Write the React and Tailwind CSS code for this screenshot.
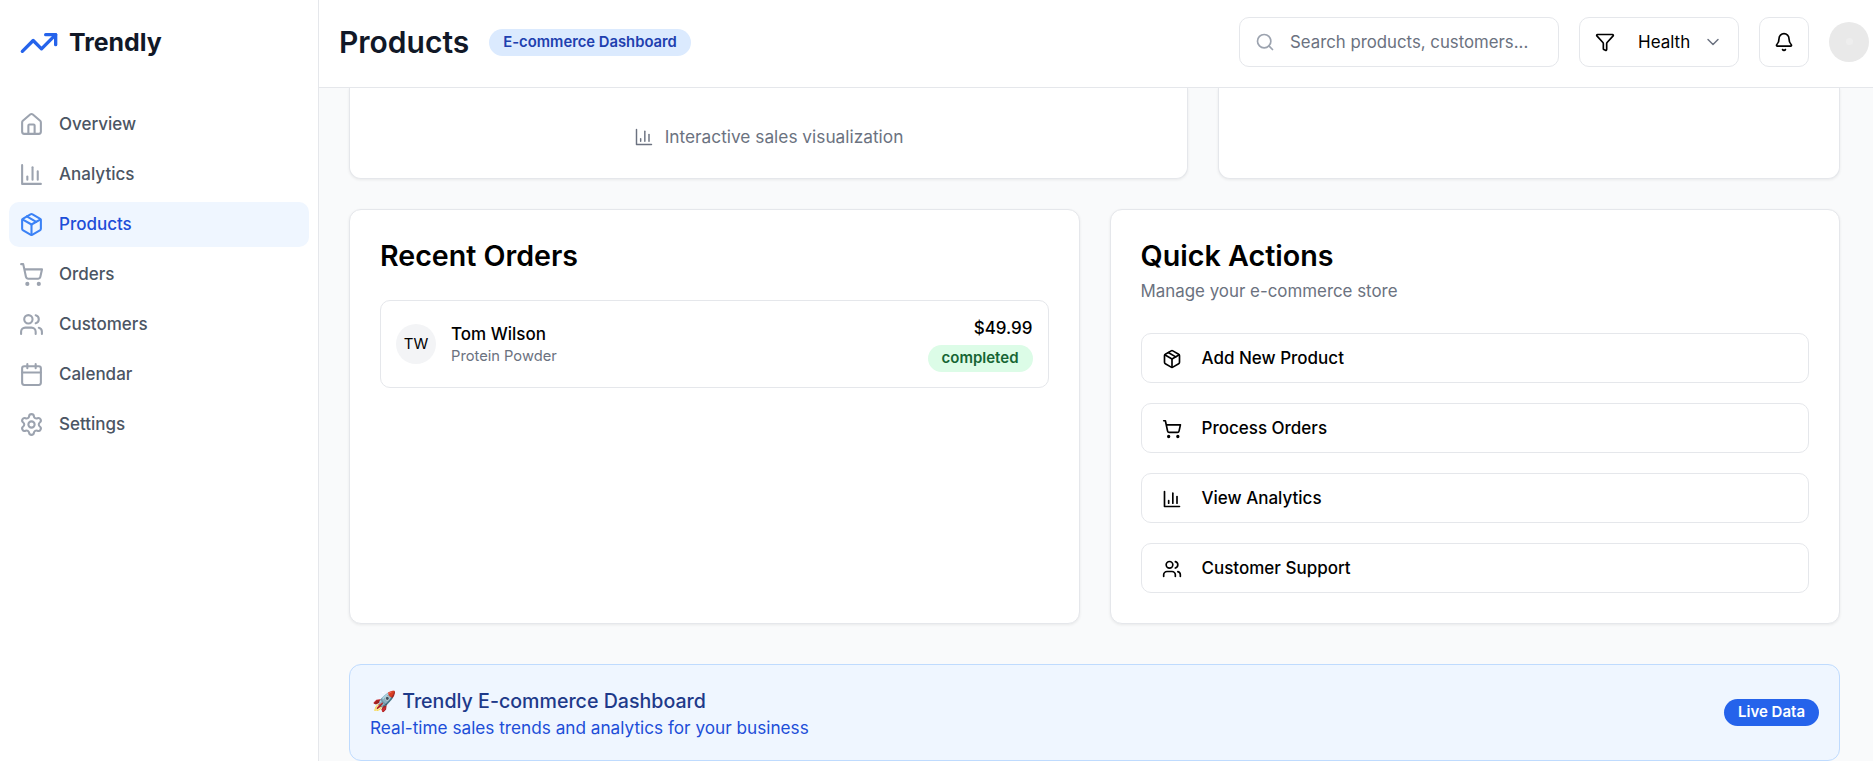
import { House, Package, ShoppingCart, Users, Calendar, Settings, Search, Funnel, ChevronDown, Bell, TrendingUp } from 'lucide-react'

// square-cornered bar chart, lucide's current one has a rounded axis
function BarChart({ className, strokeWidth = 2 }) {
  return (
    <svg
      className={className}
      viewBox="0 0 24 24"
      fill="none"
      stroke="currentColor"
      strokeWidth={strokeWidth}
      strokeLinecap="round"
      strokeLinejoin="round"
    >
      <path d="M3 3v18h18" />
      <path d="M18 17V9" />
      <path d="M13 17V5" />
      <path d="M8 17v-3" />
    </svg>
  )
}

const navItems = [
  { label: 'Overview', icon: House },
  { label: 'Analytics', icon: BarChart },
  { label: 'Products', icon: Package, active: true },
  { label: 'Orders', icon: ShoppingCart },
  { label: 'Customers', icon: Users },
  { label: 'Calendar', icon: Calendar },
  { label: 'Settings', icon: Settings },
]

const actions = [
  { label: 'Add New Product', icon: Package },
  { label: 'Process Orders', icon: ShoppingCart },
  { label: 'View Analytics', icon: BarChart },
  { label: 'Customer Support', icon: Users },
]

function Sidebar() {
  return (
    <aside className="w-[319px] shrink-0 bg-white border-r border-[#e5e7eb]">
      <div className="h-[88px] flex items-center pl-[19px] pb-[2px] gap-[10px]">
        <TrendingUp className="w-[40px] h-[40px] text-[#2563eb]" strokeWidth={2} />
        <span className="text-[24.9px] font-bold text-[#111827]">Trendly</span>
      </div>
      <nav className="mt-[14px] px-[9px] flex flex-col gap-[5px]">
        {navItems.map((item) => {
          const Icon = item.icon
          return (
            <div
              key={item.label}
              className={`h-[45px] flex items-center gap-[15px] pl-[10px] pr-[10px] rounded-[10px] text-[17px] font-medium ${
                item.active ? 'bg-[#eff6ff] text-[#1d4ed8]' : 'text-[#4b5563]'
              }`}
            >
              <Icon className={`w-[25px] h-[25px] ${item.active ? 'text-[#3b82f6]' : 'text-[#9ca3af]'}`} strokeWidth={2} />
              {item.label}
            </div>
          )
        })}
      </nav>
    </aside>
  )
}

function Header() {
  return (
    <header className="h-[88px] shrink-0 bg-white border-b border-[#e5e7eb] flex items-center justify-between pl-[20px] pr-[4px] pb-[4px]">
      <div className="flex items-center gap-[20px] pt-[2px]">
        <h1 className="text-[30px] font-semibold text-[#111827]">Products</h1>
        <span className="h-[27px] px-[14px] flex items-center rounded-full bg-[#dbeafe] text-[#1e40af] text-[14.8px] font-semibold">
          E-commerce Dashboard
        </span>
      </div>
      <div className="flex items-center gap-[20px]">
        <div className="w-[320px] h-[50px] flex items-center gap-[15px] px-[15px] bg-white border border-[#e5e7eb] rounded-[10px]">
          <Search className="w-[20px] h-[20px] text-[#9ca3af]" strokeWidth={2} />
          <span className="mt-[2px] text-[16.8px] text-[#6b7280]">Search products, customers...</span>
        </div>
        <div className="w-[160px] h-[50px] flex items-center px-[15px] bg-white border border-[#e5e7eb] rounded-[10px]">
          <Funnel className="w-[20px] h-[20px] text-black" strokeWidth={2} />
          <span className="mt-[2px] ml-[23px] text-[17px] text-black">Health</span>
          <ChevronDown className="ml-auto w-[20px] h-[20px] text-[#6b7280]" strokeWidth={1.75} />
        </div>
        <div className="w-[50px] h-[50px] flex items-center justify-center bg-white border border-[#e5e7eb] rounded-[10px]">
          <Bell className="w-[20px] h-[20px] text-black" strokeWidth={2} />
        </div>
        <div className="w-[40px] h-[40px] rounded-full bg-[#e9e9e9] flex items-center justify-center">
          <div className="w-[7px] h-[7px] rounded-full bg-[#eeeeee]" />
        </div>
      </div>
    </header>
  )
}

function Card({ className, children }) {
  return (
    <div className={`bg-white border border-[#e5e7eb] rounded-[12px] shadow-[0_1px_3px_rgba(0,0,0,0.07)] ${className}`}>
      {children}
    </div>
  )
}

function App() {
  return (
    <div className="flex h-screen overflow-hidden bg-[#f9fafb] font-['Inter',sans-serif]">
      <Sidebar />
      <div className="flex-1 min-w-0 flex flex-col">
        <Header />
        <main className="flex-1 min-h-0 overflow-hidden pl-[30px] pr-[33px]">
          {/* chart row, scrolled off at the top */}
          <div className="grid grid-cols-[839px_622px] gap-[30px] h-[91px]">
            <Card className="rounded-t-none border-t-0 flex items-center justify-center gap-[11px] pt-[7px] text-[#6b7280]">
              <BarChart className="w-[20px] h-[20px]" strokeWidth={1.75} />
              <span className="text-[17.3px]">Interactive sales visualization</span>
            </Card>
            <Card className="rounded-t-none border-t-0" />
          </div>

          <div className="grid grid-cols-2 gap-[30px] mt-[30px] h-[414px]">
            <Card className="p-[30px]">
              <h2 className="text-[28.6px] font-semibold text-black leading-[32px]">Recent Orders</h2>
              <div className="mt-[28px] h-[88px] flex items-center justify-between px-[15px] border border-[#e5e7eb] rounded-[10px]">
                <div className="flex items-center gap-[15px]">
                  <div className="w-[40px] h-[40px] rounded-full bg-[#f3f4f6] flex items-center justify-center text-[15px] text-black">
                    TW
                  </div>
                  <div>
                    <div className="text-[17px] font-medium text-black leading-[24px]">Tom Wilson</div>
                    <div className="text-[14.7px] text-[#6b7280] leading-[20px]">Protein Powder</div>
                  </div>
                </div>
                <div className="flex flex-col items-end gap-[5px]">
                  <div className="text-[17px] font-medium text-black leading-[24px]">$49.99</div>
                  <span className="h-[27px] px-[14px] flex items-center rounded-full bg-[#dcfce7] text-[#166534] text-[15px] font-semibold">
                    completed
                  </span>
                </div>
              </div>
            </Card>

            <Card className="p-[30px]">
              <h2 className="text-[28.7px] font-semibold text-black leading-[32px]">Quick Actions</h2>
              <p className="mt-[7px] text-[16.9px] text-[#6b7280] leading-[24px]">Manage your e-commerce store</p>
              <div className="mt-[30px] flex flex-col gap-[20px]">
                {actions.map((action) => {
                  const Icon = action.icon
                  return (
                    <div key={action.label} className="h-[50px] flex items-center gap-[20px] px-[20px] pt-[2px] border border-[#e5e7eb] rounded-[10px]">
                      <Icon className="w-[20px] h-[20px] text-black" strokeWidth={2} />
                      <span className="text-[17px] font-medium text-black">{action.label}</span>
                    </div>
                  )
                })}
              </div>
            </Card>
          </div>

          <div className="mt-[41px] h-[97px] flex items-center justify-between px-[20px] pt-[2px] bg-[#eff6ff] border border-[#bfdbfe] rounded-[12px]">
            <div>
              <div className="text-[19.6px] font-medium text-[#1e3a8a] leading-[28px]">
                <span className="ml-[2px] mr-[1px]">🚀</span> Trendly E-commerce Dashboard
              </div>
              <div className="text-[17.2px] text-[#1d4ed8] leading-[25px]">Real-time sales trends and analytics for your business</div>
            </div>
            <span className="-mt-[2px] h-[27px] px-[14px] flex items-center rounded-full bg-[#2563eb] text-white text-[15px] font-semibold">
              Live Data
            </span>
          </div>
        </main>
      </div>
    </div>
  )
}

export default App
